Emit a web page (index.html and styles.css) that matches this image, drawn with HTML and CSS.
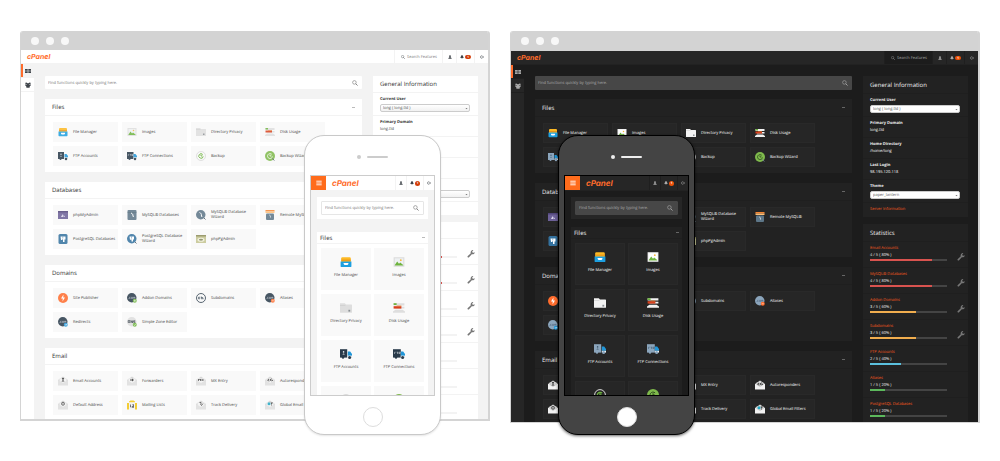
FILE: index.html
```html
<!DOCTYPE html>
<html lang="en">
<head>
<meta charset="utf-8">
<title>cPanel themes</title>
<link rel="stylesheet" href="styles.css">
</head>
<body>
<svg class="sprite" aria-hidden="true">
  <symbol id="files" viewBox="0 0 20 20"><path fill="#fdb924" d="M4 2h12a2 2 0 0 1 2 2v6H2V4a2 2 0 0 1 2-2z"/><path fill="#e8961c" d="M2 6h16v2H2z"/><path fill="#1d9fe0" d="M1 9h18v8a1.500 1.500 0 0 1-1.500 1.500h-15A1.500 1.500 0 0 1 1 17z"/><path fill="#fff" d="M6 11.500h8v2l-1.500 1.500h-5L6 13.500z"/></symbol>
  <symbol id="images" viewBox="0 0 20 20"><path fill="var(--paper)" d="M1 2h18v16H1z"/><path fill="var(--photo)" d="M3 4h14v12H3z"/><path fill="#6eb43f" d="M3 15l4-6 3 4 2-2 5 4v1H3z"/><circle cx="13" cy="7" r="1.500" fill="#f6b73c"/></symbol>
  <symbol id="folder" viewBox="0 0 20 20"><path fill="var(--paper)" d="M0 2h8l2 2h9a1 1 0 0 1 1 1v12a1 1 0 0 1-1 1H1a1 1 0 0 1-1-1z"/><path fill="var(--fold)" d="M0 5h9v1H0z"/><path fill="#8a8f94" d="M14 13h3v3h-3z"/></symbol>
  <symbol id="disk" viewBox="0 0 20 20"><path fill="var(--paper)" d="M1 2h18v4H1zM4 8h15v3H4zM4 13h12l4 3v2H0v-2z"/><path fill="#6eb43f" d="M1 2h5v3H1z"/><path fill="#d9411e" d="M1 7h13v4H1z"/><path fill="#e5812c" d="M6 6h8v1H6z"/></symbol>
  <symbol id="ftp" viewBox="0 0 20 20"><path fill="var(--ink)" d="M0 2h12v14H0z"/><path fill="#2196d8" d="M13 6h4l3 4v3h-7z"/><path fill="var(--cab)" d="M13 13h7v3h-7z"/><circle cx="5" cy="16" r="2" fill="var(--ink)"/><circle cx="16" cy="16" r="2.500" fill="var(--ink)"/><circle cx="6" cy="6.500" r="1.300" fill="var(--mark)"/><path fill="var(--mark)" d="M4 11q2-3.500 4 0z"/></symbol>
  <symbol id="ftpc" viewBox="0 0 20 20"><path fill="var(--ink)" d="M0 2h13v14H0z"/><path fill="#2196d8" d="M13 6h4l3 4v3h-7z"/><path fill="var(--cab)" d="M13 13h7v3h-7z"/><circle cx="5" cy="16" r="2" fill="var(--ink)"/><circle cx="16" cy="16" r="2.500" fill="var(--ink)"/><path stroke="var(--mark)" stroke-width=".8" fill="none" d="M2.500 10V7h2M6 7h3M7.500 7v3M10 10V7h2v2h-2"/></symbol>
  <symbol id="backup" viewBox="0 0 20 20"><circle cx="10" cy="10" r="9" fill="none" stroke="var(--ring)" stroke-width="1.500"/><path fill="none" stroke="#6eb43f" stroke-width="2" d="M13.500 7A4.500 4.500 0 1 0 14.500 11M10 7v3h3"/></symbol>
  <symbol id="bwiz" viewBox="0 0 20 20"><circle cx="10" cy="10" r="10" fill="#7fba4c"/><path fill="none" stroke="var(--wiz)" stroke-width="1.500" d="M13.500 6.500a5 5 0 1 0 1.500 4.500M10 7v3h3"/><path stroke="var(--handle)" stroke-width="2" d="M15 15l3.500 4"/></symbol>
  <symbol id="pma" viewBox="0 0 20 20"><path fill="#6c6097" d="M0 2h20v16H0z"/><path fill="#50457a" d="M0 2h20v3H0z"/><path fill="#d9d4ea" d="M6 14c1-3 3-5 4-6v6zM11 14V9l3 5z"/></symbol>
  <symbol id="mysql" viewBox="0 0 20 20"><rect x="1" y="0" width="18" height="20" rx="2" fill="#5d7688"/><path fill="#48606f" d="M1 5h18v1H1z"/><path fill="none" stroke="#fff" stroke-width="2" d="M8 6c3 1 4 3 4 6l1 2"/></symbol>
  <symbol id="mysqlw" viewBox="0 0 20 20"><circle cx="9.500" cy="9.500" r="9.500" fill="#5d7688"/><path fill="none" stroke="#fff" stroke-width="2" d="M7 5c3 1 4 3 4 7l1 2"/><path stroke="var(--handle)" stroke-width="2" d="M16 16l3 3"/></symbol>
  <symbol id="remote" viewBox="0 0 20 20"><path fill="#f58634" d="M1 0h18v3H1z"/><path fill="#fdc078" d="M1 3h18v3H1z"/><rect x="2" y="7" width="16" height="13" rx="2" fill="#5d7688"/><path fill="none" stroke="#fff" stroke-width="1.500" d="M9 10c2 1 2 3 2 5"/></symbol>
  <symbol id="pg" viewBox="0 0 20 20"><rect x="1" y="0" width="18" height="20" rx="3" fill="#34729f"/><path fill="#fff" d="M5 5h10v6h-2v5h-3v-5H8v1H6z"/><path stroke="#34729f" d="M9.500 5v4"/></symbol>
  <symbol id="pgw" viewBox="0 0 20 20"><circle cx="9.500" cy="9.500" r="9.500" fill="#34729f"/><path fill="#fff" d="M5 5h9v6h-2v4H9v-4H7v1H6z"/><path stroke="#34729f" d="M9 5v4"/><path stroke="var(--handle)" stroke-width="2" d="M16 16l3 3"/></symbol>
  <symbol id="ppg" viewBox="0 0 20 20"><path fill="#c5c591" d="M0 2h20v16H0z"/><path fill="#8c8c58" d="M0 2h20v3H0z"/><ellipse cx="10" cy="11.500" rx="7" ry="4" fill="#f0f0d8"/><path stroke="#777a50" stroke-width="2" d="M6 11.500h8M10 9.500v4"/></symbol>
  <symbol id="pub" viewBox="0 0 20 20"><circle cx="10" cy="10" r="10" fill="#ff6c2c"/><path fill="#fff" d="M11 3l-5 8h3.500L9 17l5-8h-3.500z"/></symbol>
  <symbol id="dot" viewBox="0 0 20 20"><circle cx="9.500" cy="9.500" r="9.500" fill="var(--ink)"/><path stroke="var(--mark)" stroke-width=".8" d="M3 11h1M7 8.500H5v2.500h2M9 8.500h2V11H9zM13 11V8.500h3V11M14.500 8.500V11" fill="none"/></symbol>
  <symbol id="addon" viewBox="0 0 20 20"><use href="#dot"/><circle cx="15.500" cy="15.500" r="4" fill="#6eb43f"/><path stroke="#fff" d="M13.500 15.500h4M15.500 13.500v4"/></symbol>
  <symbol id="alias" viewBox="0 0 20 20"><use href="#dot"/><circle cx="15.500" cy="15.500" r="4" fill="#ff6c2c"/><path stroke="#fff" d="M13.500 15.500h4"/></symbol>
  <symbol id="redir" viewBox="0 0 20 20"><use href="#dot"/><circle cx="15.500" cy="15.500" r="4" fill="#2196d8"/><path stroke="#fff" d="M13.500 15.500h4M16 14l1.500 1.500L16 17" fill="none"/></symbol>
  <symbol id="sub" viewBox="0 0 20 20"><circle cx="10" cy="10" r="9" fill="none" stroke="var(--ink)" stroke-width="1.800"/><path fill="none" stroke="var(--ink)" stroke-width="1.500" d="M8 8.500H5v3h3M10.500 7v4.500h3V9h-3M15 11.500h1"/></symbol>
  <symbol id="zone" viewBox="0 0 20 20"><circle cx="9.500" cy="9.500" r="9.500" fill="var(--paper)"/><path fill="none" stroke="#39424b" stroke-width="1.600" d="M2.500 7v4h3V7zM8 12V7l3 5V7M16.500 7.500H13v2h3v2h-3"/><circle cx="15.500" cy="15.500" r="4" fill="#6eb43f"/><path stroke="#fff" d="M13.500 15.500l1.500 1.500 2.500-3" fill="none"/></symbol>
  <symbol id="env" viewBox="0 0 20 20"><path fill="var(--flap)" d="M0 8l10-7 10 7v3H0z"/><path fill="var(--sheet)" d="M3 5h14v9H3z"/><path fill="var(--paper)" d="M0 8l10 6 10-6v11H0z"/></symbol>
  <symbol id="e-user" viewBox="0 0 20 20"><use href="#env"/><circle cx="10" cy="5.500" r="2" fill="#333"/><path fill="#333" d="M7 11q3-5 6 0z"/></symbol>
  <symbol id="e-fwd" viewBox="0 0 20 20"><use href="#env"/><path fill="#333" d="M6 7h4V5l4 3-4 3V9H6z"/></symbol>
  <symbol id="e-mx" viewBox="0 0 20 20"><use href="#env"/><path fill="none" stroke="#333" stroke-width="1.500" d="M5 10V6l2 2 2-2v4M11 6l4 4M15 6l-4 4"/></symbol>
  <symbol id="e-auto" viewBox="0 0 20 20"><use href="#env"/><path fill="none" stroke="#333" stroke-width="1.500" d="M8 6L5 8l3 3M6 8h3M13 5l-3 3 3 2M11 8h4v2"/></symbol>
  <symbol id="e-at" viewBox="0 0 20 20"><use href="#env"/><circle cx="10" cy="7.500" r="3" fill="none" stroke="#333" stroke-width="1.500"/><circle cx="10" cy="7.500" r="1" fill="#333"/></symbol>
  <symbol id="e-list" viewBox="0 0 20 20"><path fill="#f3c614" d="M0 6h4v13H0zM16 6h4v13h-4zM4 3l3-2h6l3 2v2H4z"/><path fill="var(--sheet)" d="M4 5h12v14H4z"/><path fill="none" stroke="#333" stroke-width="1.500" d="M7 9v5h2M11 9h2v6h-2v-3h2"/></symbol>
  <symbol id="e-track" viewBox="0 0 20 20"><use href="#env"/><path fill="none" stroke="#333" stroke-width="1.500" d="M7 5h3v3M9 8l2 3 3-4"/></symbol>
  <symbol id="e-filt" viewBox="0 0 20 20"><use href="#env"/><circle cx="8" cy="7.500" r="3" fill="#22a7c4"/><path fill="#333" d="M11 5h5l-2 3v4l-1-1V8z"/></symbol>
  <symbol id="search" viewBox="0 0 20 20"><circle cx="8" cy="8" r="6" fill="none" stroke="currentColor" stroke-width="2"/><path stroke="currentColor" stroke-width="3" d="M12.500 12.500l6 6"/></symbol>
  <symbol id="user" viewBox="0 0 20 20"><path fill="currentColor" d="M10 1a4.500 4.500 0 0 1 3 8v3l5 3v4H2v-4l5-3V9a4.500 4.500 0 0 1 3-8z"/></symbol>
  <symbol id="bell" viewBox="0 0 20 20"><path fill="currentColor" d="M10 1c4 0 5.500 3 5.500 7l3 7h-17l3-7C4.500 4 6 1 10 1zM7 16h6q-3 5-6 0z"/></symbol>
  <symbol id="out" viewBox="0 0 20 20"><path fill="none" stroke="currentColor" stroke-width="2.500" d="M12 4.500A6.500 6.500 0 1 0 12 15.500M8 10h10M15 6.500l3.500 3.500-3.500 3.500"/></symbol>
  <symbol id="grid" viewBox="0 0 20 20"><path fill="currentColor" d="M0 3h9v6H0zM11 3h9v6h-9zM0 11h9v6H0zM11 11h9v6h-9z"/></symbol>
  <symbol id="users" viewBox="0 0 20 20"><circle cx="4" cy="4.500" r="3" fill="currentColor"/><circle cx="16" cy="4.500" r="3" fill="currentColor"/><circle cx="10" cy="7" r="4" fill="currentColor"/><path fill="currentColor" d="M0 8h20l-2 5H2zM4 12h12v6q-6 2-12 0z"/></symbol>
  <symbol id="wrench" viewBox="0 0 20 20"><path fill="currentColor" d="M19.500 5.500a5.500 5.500 0 0 1-7.500 5L4.500 18.500a2.200 2.200 0 0 1-3-3L9.500 8A5.500 5.500 0 0 1 16 .500L13 3.500l.500 3 3 .500z"/></symbol>
  <symbol id="menu" viewBox="0 0 20 20"><path stroke="currentColor" stroke-width="3" d="M1 4h18M1 10h18M1 16h18"/></symbol>
  <symbol id="caret" viewBox="0 0 20 20"><path fill="currentColor" d="M3 6h14l-7 9z"/></symbol>
</svg>

<main class="stage">

<section class="mock light" aria-label="Light theme">
  <div class="window">
    <div class="chrome"><i></i><i></i><i></i></div>
    <div class="screen">
      <header class="topbar">
        <a class="logo" href="#">cPanel</a>
        <label class="feature"><svg><use href="#search"/></svg><input type="text" placeholder="Search Features" aria-label="Search Features"></label>
        <button class="tool" aria-label="Account"><svg><use href="#user"/></svg></button>
        <button class="tool bell" aria-label="Notifications"><svg><use href="#bell"/></svg><b>1</b></button>
        <button class="tool" aria-label="Log out"><svg><use href="#out"/></svg></button>
      </header>
      <div class="body">
        <nav class="side"><a class="on" href="#" aria-label="Home"><svg><use href="#grid"/></svg></a><a href="#" aria-label="User Manager"><svg><use href="#users"/></svg></a></nav>
        <div class="content">
          <div class="groups">
            <label class="find"><input type="text" placeholder="Find functions quickly by typing here." aria-label="Find functions"><svg><use href="#search"/></svg></label>
            <section class="panel">
              <h2>Files<button class="fold" aria-label="Collapse Files"></button></h2>
              <div class="tiles">
                <a href="#"><svg><use href="#files"/></svg><span>File Manager</span></a>
                <a href="#"><svg><use href="#images"/></svg><span>Images</span></a>
                <a href="#"><svg><use href="#folder"/></svg><span>Directory Privacy</span></a>
                <a href="#"><svg><use href="#disk"/></svg><span>Disk Usage</span></a>
                <a href="#"><svg><use href="#ftp"/></svg><span>FTP Accounts</span></a>
                <a href="#"><svg><use href="#ftpc"/></svg><span>FTP Connections</span></a>
                <a href="#"><svg><use href="#backup"/></svg><span>Backup</span></a>
                <a href="#"><svg><use href="#bwiz"/></svg><span>Backup Wizard</span></a>
              </div>
            </section>
            <section class="panel">
              <h2>Databases<button class="fold" aria-label="Collapse Databases"></button></h2>
              <div class="tiles">
                <a href="#"><svg><use href="#pma"/></svg><span>phpMyAdmin</span></a>
                <a href="#"><svg><use href="#mysql"/></svg><span>MySQL® Databases</span></a>
                <a href="#"><svg><use href="#mysqlw"/></svg><span>MySQL® Database Wizard</span></a>
                <a href="#"><svg><use href="#remote"/></svg><span>Remote MySQL®</span></a>
                <a href="#"><svg><use href="#pg"/></svg><span>PostgreSQL Databases</span></a>
                <a href="#"><svg><use href="#pgw"/></svg><span>PostgreSQL Database Wizard</span></a>
                <a href="#"><svg><use href="#ppg"/></svg><span>phpPgAdmin</span></a>
              </div>
            </section>
            <section class="panel">
              <h2>Domains<button class="fold" aria-label="Collapse Domains"></button></h2>
              <div class="tiles">
                <a href="#"><svg><use href="#pub"/></svg><span>Site Publisher</span></a>
                <a href="#"><svg><use href="#addon"/></svg><span>Addon Domains</span></a>
                <a href="#"><svg><use href="#sub"/></svg><span>Subdomains</span></a>
                <a href="#"><svg><use href="#alias"/></svg><span>Aliases</span></a>
                <a href="#"><svg><use href="#redir"/></svg><span>Redirects</span></a>
                <a href="#"><svg><use href="#zone"/></svg><span>Simple Zone Editor</span></a>
              </div>
            </section>
            <section class="panel">
              <h2>Email<button class="fold" aria-label="Collapse Email"></button></h2>
              <div class="tiles">
                <a href="#"><svg><use href="#e-user"/></svg><span>Email Accounts</span></a>
                <a href="#"><svg><use href="#e-fwd"/></svg><span>Forwarders</span></a>
                <a href="#"><svg><use href="#e-mx"/></svg><span>MX Entry</span></a>
                <a href="#"><svg><use href="#e-auto"/></svg><span>Autoresponders</span></a>
                <a href="#"><svg><use href="#e-at"/></svg><span>Default Address</span></a>
                <a href="#"><svg><use href="#e-list"/></svg><span>Mailing Lists</span></a>
                <a href="#"><svg><use href="#e-track"/></svg><span>Track Delivery</span></a>
                <a href="#"><svg><use href="#e-filt"/></svg><span>Global Email Filters</span></a>
              </div>
            </section>
          </div>
          <aside class="rail">
            <section class="panel info">
              <h2>General Information</h2>
              <div class="row"><label for="l-user">Current User</label><span class="pick"><select id="l-user"><option>long ( long.tld )</option></select><svg><use href="#caret"/></svg></span></div>
              <div class="row"><b>Primary Domain</b><span>long.tld</span></div>
              <div class="row"><b>Home Directory</b><span>/home/long</span></div>
              <div class="row"><b>Last Login</b><span>98.195.120.118</span></div>
              <div class="row"><label for="l-theme">Theme</label><span class="pick"><select id="l-theme"><option>paper_lantern</option></select><svg><use href="#caret"/></svg></span></div>
              <a class="more" href="#">Server Information</a>
            </section>
            <section class="panel stats">
              <h2>Statistics</h2>
              <div class="stat red"><a href="#">Email Accounts</a><span>4 / 5 ( 80% )</span><div class="bar"><i style="width:80%"></i></div><svg><use href="#wrench"/></svg></div>
              <div class="stat red"><a href="#">MySQL® Databases</a><span>4 / 5 ( 80% )</span><div class="bar"><i style="width:80%"></i></div><svg><use href="#wrench"/></svg></div>
              <div class="stat amber"><a href="#">Addon Domains</a><span>3 / 5 ( 60% )</span><div class="bar"><i style="width:60%"></i></div><svg><use href="#wrench"/></svg></div>
              <div class="stat amber"><a href="#">Subdomains</a><span>3 / 5 ( 60% )</span><div class="bar"><i style="width:60%"></i></div><svg><use href="#wrench"/></svg></div>
              <div class="stat blue"><a href="#">FTP Accounts</a><span>2 / 5 ( 40% )</span><div class="bar"><i style="width:40%"></i></div></div>
              <div class="stat green"><a href="#">Aliases</a><span>1 / 5 ( 20% )</span><div class="bar"><i style="width:20%"></i></div></div>
              <div class="stat green"><a href="#">PostgreSQL Databases</a><span>1 / 5 ( 20% )</span><div class="bar"><i style="width:20%"></i></div></div>
            </section>
          </aside>
        </div>
      </div>
    </div>
  </div>
  <div class="phone">
    <div class="speaker"><i></i><b></b></div>
    <div class="handset">
      <header class="topbar">
        <button class="menu" aria-label="Menu"><svg><use href="#menu"/></svg></button>
        <a class="logo" href="#">cPanel</a>
        <button class="tool" aria-label="Account"><svg><use href="#user"/></svg></button>
        <button class="tool bell" aria-label="Notifications"><svg><use href="#bell"/></svg><b>1</b></button>
        <button class="tool" aria-label="Log out"><svg><use href="#out"/></svg></button>
      </header>
      <div class="feed">
        <div class="findbox"><label class="find"><input type="text" placeholder="Find functions quickly by typing here." aria-label="Find functions"><svg><use href="#search"/></svg></label></div>
        <section class="panel">
          <h2>Files<button class="fold" aria-label="Collapse Files"></button></h2>
          <div class="tiles">
            <a href="#"><svg><use href="#files"/></svg><span>File Manager</span></a>
            <a href="#"><svg><use href="#images"/></svg><span>Images</span></a>
            <a href="#"><svg><use href="#folder"/></svg><span>Directory Privacy</span></a>
            <a href="#"><svg><use href="#disk"/></svg><span>Disk Usage</span></a>
            <a href="#"><svg><use href="#ftp"/></svg><span>FTP Accounts</span></a>
            <a href="#"><svg><use href="#ftpc"/></svg><span>FTP Connections</span></a>
            <a href="#" aria-label="Backup"><svg><use href="#backup"/></svg></a>
            <a href="#" aria-label="Backup Wizard"><svg><use href="#bwiz"/></svg></a>
          </div>
        </section>
      </div>
    </div>
    <button class="home" aria-label="Home"></button>
  </div>
</section>

<section class="mock dark" aria-label="Dark theme">
  <div class="window">
    <div class="chrome"><i></i><i></i><i></i></div>
    <div class="screen">
      <header class="topbar">
        <a class="logo" href="#">cPanel</a>
        <label class="feature"><svg><use href="#search"/></svg><input type="text" placeholder="Search Features" aria-label="Search Features"></label>
        <button class="tool" aria-label="Account"><svg><use href="#user"/></svg></button>
        <button class="tool bell" aria-label="Notifications"><svg><use href="#bell"/></svg><b>1</b></button>
        <button class="tool" aria-label="Log out"><svg><use href="#out"/></svg></button>
      </header>
      <div class="body">
        <nav class="side"><a class="on" href="#" aria-label="Home"><svg><use href="#grid"/></svg></a><a href="#" aria-label="User Manager"><svg><use href="#users"/></svg></a></nav>
        <div class="content">
          <div class="groups">
            <label class="find"><input type="text" placeholder="Find functions quickly by typing here." aria-label="Find functions"><svg><use href="#search"/></svg></label>
            <section class="panel">
              <h2>Files<button class="fold" aria-label="Collapse Files"></button></h2>
              <div class="tiles">
                <a href="#"><svg><use href="#files"/></svg><span>File Manager</span></a>
                <a href="#"><svg><use href="#images"/></svg><span>Images</span></a>
                <a href="#"><svg><use href="#folder"/></svg><span>Directory Privacy</span></a>
                <a href="#"><svg><use href="#disk"/></svg><span>Disk Usage</span></a>
                <a href="#"><svg><use href="#ftp"/></svg><span>FTP Accounts</span></a>
                <a href="#"><svg><use href="#ftpc"/></svg><span>FTP Connections</span></a>
                <a href="#"><svg><use href="#backup"/></svg><span>Backup</span></a>
                <a href="#"><svg><use href="#bwiz"/></svg><span>Backup Wizard</span></a>
              </div>
            </section>
            <section class="panel">
              <h2>Databases<button class="fold" aria-label="Collapse Databases"></button></h2>
              <div class="tiles">
                <a href="#"><svg><use href="#pma"/></svg><span>phpMyAdmin</span></a>
                <a href="#"><svg><use href="#mysql"/></svg><span>MySQL® Databases</span></a>
                <a href="#"><svg><use href="#mysqlw"/></svg><span>MySQL® Database Wizard</span></a>
                <a href="#"><svg><use href="#remote"/></svg><span>Remote MySQL®</span></a>
                <a href="#"><svg><use href="#pg"/></svg><span>PostgreSQL Databases</span></a>
                <a href="#"><svg><use href="#pgw"/></svg><span>PostgreSQL Database Wizard</span></a>
                <a href="#"><svg><use href="#ppg"/></svg><span>phpPgAdmin</span></a>
              </div>
            </section>
            <section class="panel">
              <h2>Domains<button class="fold" aria-label="Collapse Domains"></button></h2>
              <div class="tiles">
                <a href="#"><svg><use href="#pub"/></svg><span>Site Publisher</span></a>
                <a href="#"><svg><use href="#addon"/></svg><span>Addon Domains</span></a>
                <a href="#"><svg><use href="#sub"/></svg><span>Subdomains</span></a>
                <a href="#"><svg><use href="#alias"/></svg><span>Aliases</span></a>
                <a href="#"><svg><use href="#redir"/></svg><span>Redirects</span></a>
                <a href="#"><svg><use href="#zone"/></svg><span>Simple Zone Editor</span></a>
              </div>
            </section>
            <section class="panel">
              <h2>Email<button class="fold" aria-label="Collapse Email"></button></h2>
              <div class="tiles">
                <a href="#"><svg><use href="#e-user"/></svg><span>Email Accounts</span></a>
                <a href="#"><svg><use href="#e-fwd"/></svg><span>Forwarders</span></a>
                <a href="#"><svg><use href="#e-mx"/></svg><span>MX Entry</span></a>
                <a href="#"><svg><use href="#e-auto"/></svg><span>Autoresponders</span></a>
                <a href="#"><svg><use href="#e-at"/></svg><span>Default Address</span></a>
                <a href="#"><svg><use href="#e-list"/></svg><span>Mailing Lists</span></a>
                <a href="#"><svg><use href="#e-track"/></svg><span>Track Delivery</span></a>
                <a href="#"><svg><use href="#e-filt"/></svg><span>Global Email Filters</span></a>
              </div>
            </section>
          </div>
          <aside class="rail">
            <section class="panel info">
              <h2>General Information</h2>
              <div class="row"><label for="d-user">Current User</label><span class="pick"><select id="d-user"><option>long ( long.tld )</option></select><svg><use href="#caret"/></svg></span></div>
              <div class="row"><b>Primary Domain</b><span>long.tld</span></div>
              <div class="row"><b>Home Directory</b><span>/home/long</span></div>
              <div class="row"><b>Last Login</b><span>98.195.120.118</span></div>
              <div class="row"><label for="d-theme">Theme</label><span class="pick"><select id="d-theme"><option>paper_lantern</option></select><svg><use href="#caret"/></svg></span></div>
              <a class="more" href="#">Server Information</a>
            </section>
            <section class="panel stats">
              <h2>Statistics</h2>
              <div class="stat red"><a href="#">Email Accounts</a><span>4 / 5 ( 80% )</span><div class="bar"><i style="width:80%"></i></div><svg><use href="#wrench"/></svg></div>
              <div class="stat red"><a href="#">MySQL® Databases</a><span>4 / 5 ( 80% )</span><div class="bar"><i style="width:80%"></i></div><svg><use href="#wrench"/></svg></div>
              <div class="stat amber"><a href="#">Addon Domains</a><span>3 / 5 ( 60% )</span><div class="bar"><i style="width:60%"></i></div><svg><use href="#wrench"/></svg></div>
              <div class="stat amber"><a href="#">Subdomains</a><span>3 / 5 ( 60% )</span><div class="bar"><i style="width:60%"></i></div><svg><use href="#wrench"/></svg></div>
              <div class="stat blue"><a href="#">FTP Accounts</a><span>2 / 5 ( 40% )</span><div class="bar"><i style="width:40%"></i></div></div>
              <div class="stat green"><a href="#">Aliases</a><span>1 / 5 ( 20% )</span><div class="bar"><i style="width:20%"></i></div></div>
              <div class="stat green"><a href="#">PostgreSQL Databases</a><span>1 / 5 ( 20% )</span><div class="bar"><i style="width:20%"></i></div></div>
            </section>
          </aside>
        </div>
      </div>
    </div>
  </div>
  <div class="phone">
    <div class="speaker"><i></i><b></b></div>
    <div class="handset">
      <header class="topbar">
        <button class="menu" aria-label="Menu"><svg><use href="#menu"/></svg></button>
        <a class="logo" href="#">cPanel</a>
        <button class="tool" aria-label="Account"><svg><use href="#user"/></svg></button>
        <button class="tool bell" aria-label="Notifications"><svg><use href="#bell"/></svg><b>1</b></button>
        <button class="tool" aria-label="Log out"><svg><use href="#out"/></svg></button>
      </header>
      <div class="feed">
        <div class="findbox"><label class="find"><input type="text" placeholder="Find functions quickly by typing here." aria-label="Find functions"><svg><use href="#search"/></svg></label></div>
        <section class="panel">
          <h2>Files<button class="fold" aria-label="Collapse Files"></button></h2>
          <div class="tiles">
            <a href="#"><svg><use href="#files"/></svg><span>File Manager</span></a>
            <a href="#"><svg><use href="#images"/></svg><span>Images</span></a>
            <a href="#"><svg><use href="#folder"/></svg><span>Directory Privacy</span></a>
            <a href="#"><svg><use href="#disk"/></svg><span>Disk Usage</span></a>
            <a href="#"><svg><use href="#ftp"/></svg><span>FTP Accounts</span></a>
            <a href="#"><svg><use href="#ftpc"/></svg><span>FTP Connections</span></a>
            <a href="#" aria-label="Backup"><svg><use href="#backup"/></svg></a>
            <a href="#" aria-label="Backup Wizard"><svg><use href="#bwiz"/></svg></a>
          </div>
        </section>
      </div>
    </div>
    <button class="home" aria-label="Home"></button>
  </div>
</section>

</main>
</body>
</html>
```
FILE: styles.css
```css
* { box-sizing: border-box; }

body {
  margin: 0;
  background: #fff;
  font: 4px/7px "Open Sans", sans-serif;
  text-rendering: geometricPrecision;
}

a { color: inherit; text-decoration: none; }
h2 { margin: 0; }
i { font-style: normal; }

button, input, select {
  margin: 0;
  padding: 0;
  border: 0;
  border-radius: 0;
  background: none;
  color: inherit;
  font: inherit;
  text-rendering: inherit;
  appearance: none;
}

svg { flex: none; display: block; }
.sprite { position: absolute; width: 0; height: 0; }

.stage {
  display: grid;
  grid-template-columns: 1fr 1fr;
  align-items: start;
  gap: 20px;
  padding: 31px 20px;
}

/* Themes */

.mock { position: relative; color: var(--text); }

.light {
  --bg: #f3f3f3;
  --surface: #fff;
  --line: #f3f3f3;
  --tile: #f9f9f9;
  --edge: #f9f9f9;
  --text: #333;
  --label: #444;
  --muted: #777;
  --icon: #3f444a;
  --field: #fff;
  --field-edge: #e6e6e6;
  --link: #ff6c2c;
  --track: #f3f3f3;
  --badge: #d33c07;
  --ink: #293a4a;
  --cab: #dfe3e6;
  --mark: #e8edf2;
  --paper: #dedede;
  --photo: #eef1f3;
  --fold: #c9c9c9;
  --flap: #d2d2d2;
  --sheet: #f3f3f3;
  --ring: #d2d2d2;
  --wiz: #fff;
  --handle: #52606b;
  --chrome: 19px;
  --screen: 369px;
  --head: 17px;
  --search: 13px;
}

.dark {
  --bg: #1c1c1c;
  --surface: #222;
  --line: #1f1f1f;
  --tile: #262626;
  --edge: #292929;
  --text: #eee;
  --label: #fff;
  --muted: #aaa;
  --icon: #aaa;
  --field: #474747;
  --field-edge: #474747;
  --link: #ff5c1f;
  --track: #444;
  --badge: #ee5208;
  --ink: #8ba5bc;
  --cab: #eef2f5;
  --mark: #3c5469;
  --paper: #f2f2f2;
  --photo: #fff;
  --fold: #ccc;
  --flap: #ddd;
  --sheet: #ccc;
  --ring: #eee;
  --wiz: #26401a;
  --handle: #6f8290;
  --chrome: 20px;
  --screen: 371px;
  --head: 18px;
  --search: 14px;
}

/* Browser window */

.window {
  overflow: hidden;
  border: solid #d4d4d4;
  border-width: 0 2px 1px 1px;
  border-radius: 3px 3px 0 0;
}

.light .window { border-bottom-width: 2px; }

.chrome {
  display: flex;
  align-items: center;
  gap: 7px;
  height: var(--chrome);
  padding-left: 10px;
  background: #d3d3d3;
}

.chrome i { width: 8px; height: 8px; border-radius: 50%; background: #f8f8f8; }

.screen { height: var(--screen); overflow: hidden; background: var(--bg); }

.topbar {
  display: flex;
  height: 14px;
  border-bottom: 1px solid var(--line);
  background: var(--surface);
}

.dark .topbar { background: #262626; border-color: #222; }

.logo {
  margin-right: auto;
  padding-left: 6px;
  color: #ff6c2c;
  font: italic 700 7px/14px Inter, sans-serif;
}

.feature {
  display: flex;
  align-items: center;
  gap: 2px;
  width: 48px;
  padding-left: 6px;
  border-left: 1px solid var(--line);
  color: var(--muted);
}

.dark .feature { background: #1c1c1c; }
.feature svg { width: 4px; height: 4px; color: var(--icon); }
.feature input { flex: 1; min-width: 0; padding-top: 1px; }
input::placeholder { color: inherit; opacity: 1; }

.tool {
  display: flex;
  align-items: center;
  justify-content: center;
  gap: 1px;
  width: 14px;
  border-left: 1px solid var(--line);
  color: var(--icon);
}

.tool svg { width: 4px; height: 4px; }
.bell { width: 18px; }
.bell b {
  width: 6px;
  border-radius: 2px;
  background: var(--badge);
  color: #fff;
  font-size: 3px;
  line-height: 4px;
}

.body { display: flex; }

.side {
  display: flex;
  flex-direction: column;
  flex: none;
  width: 13px;
  min-height: 360px;
  background: var(--surface);
}

.dark .side { background: #262626; }
.side a {
  display: grid;
  place-items: center;
  height: 14px;
  border-bottom: 1px solid var(--line);
  color: var(--icon);
}
.side .on { background: var(--bg); box-shadow: inset 2px 0 #ff6c2c; }
.side svg { width: 6px; height: 6px; }

.content {
  flex: 1;
  display: grid;
  grid-template-columns: 1fr 105px;
  align-items: start;
  gap: 11px;
  padding: 12px 10px 0 11px;
}

.dark .content { padding-top: 11px; }

.groups { display: grid; gap: 10px; }
.dark .groups .find { margin-bottom: -1px; }

.find {
  display: flex;
  align-items: center;
  height: var(--search);
  padding: 0 4px 0 3px;
  border-radius: 1px;
  background: var(--field);
  color: var(--muted);
}

.find input { flex: 1; min-width: 0; padding-top: 1px; }
.find svg { width: 6px; height: 6px; }

.panel { background: var(--surface); }

.panel h2 {
  display: flex;
  align-items: center;
  justify-content: space-between;
  height: var(--head);
  padding: 0 7px;
  border-bottom: 1px solid var(--line);
  font-size: 6px;
  font-weight: 400;
  line-height: 8px;
}

.fold { width: 3px; height: 1px; background: var(--muted); opacity: .5; }

.tiles {
  display: grid;
  grid-template-columns: repeat(auto-fill, 65px);
  grid-auto-rows: 20px;
  gap: 4px;
  padding: 6px 8px;
}

.tiles a {
  display: flex;
  align-items: center;
  gap: 5px;
  padding: 0 0 0 4px;
  border: 1px solid var(--edge);
  background: var(--tile);
  color: var(--label);
  line-height: 5px;
}

.tiles svg { width: 10px; height: 10px; }
.light .window .tiles svg { opacity: .85; }

/* Right rail */

.rail { display: grid; gap: 7px; }

.row {
  display: flex;
  flex-direction: column;
  padding: 3px 8px 3px 7px;
  border-bottom: 1px solid var(--line);
}

.row label, .row b { font-weight: 700; }
.row > span { color: var(--label); }

.pick { display: grid; align-items: center; margin-top: 1px; }
.pick select, .pick svg { grid-area: 1 / 1; }

.pick select {
  height: 8px;
  padding: 1px 2px 0;
  border: 1px solid #ccc;
  border-radius: 2px;
  background: linear-gradient(#fff, #f1f1f1);
  color: #555;
  line-height: 5px;
}

.dark .pick select { background: #fff; }
.pick svg { justify-self: end; width: 3px; height: 3px; margin-right: 2px; color: #777; pointer-events: none; }

.more { display: block; padding: 3px 7px; color: var(--link); }
.dark .more { padding-bottom: 4px; }

.stat {
  display: grid;
  grid-template-columns: 1fr 8px;
  grid-template-rows: 7px 7px 2px;
  column-gap: 10px;
  height: 26px;
  padding: 3px 3px 0 7px;
  border-bottom: 1px solid var(--line);
}

.stat > * { grid-column: 1; }
.stat a { color: var(--link); }
.stat svg { grid-column: 2; grid-row: 1 / 4; align-self: end; width: 8px; height: 8px; color: #777; }
.bar { height: 2px; background: var(--track); }
.bar i { display: block; height: 2px; background: var(--fill); }
.red { --fill: #d9534f; }
.amber { --fill: #f0ad4e; }
.blue { --fill: #5bc0de; }
.green { --fill: #5cb85c; }

/* Phone, laid over the window's lower half */

.phone {
  position: absolute;
  top: 104px;
  right: 49px;
  display: flex;
  flex-direction: column;
  align-items: center;
  width: 137px;
  height: 300px;
  border: 1px solid #c9c9c9;
  border-radius: 20px;
  background: #fff;
  box-shadow: 0 1px 2px rgb(0 0 0 / 10%);
}

.dark .phone {
  right: auto;
  left: 48px;
  border-color: #000;
  background: #444;
  box-shadow: 0 1px 3px rgb(0 0 0 / 60%);
}

.speaker {
  display: flex;
  align-items: center;
  gap: 6px;
  height: 23px;
  padding-top: 19px;
}

.speaker i { width: 4px; height: 4px; border-radius: 50%; background: #ccc; }
.speaker b { width: 21px; height: 2px; border-radius: 1px; background: #ccc; }
.dark .speaker i, .dark .speaker b { background: #eee; }

.handset {
  width: 125px;
  height: 221px;
  margin-top: 16px;
  overflow: hidden;
  border: 1px solid #ccc;
  background: var(--bg);
}

.dark .handset { border-color: #000; }

.handset .topbar { height: 15px; }
.handset .logo { font-size: 8px; line-height: 15px; }
.menu { display: grid; place-items: center; width: 15px; background: #ff6c1c; color: #fff; }
.menu svg { width: 6px; height: 6px; }
.handset .tool { width: 11px; }
.handset .bell { width: 17px; }
.handset .bell b { width: 5px; border-radius: 50%; line-height: 5px; }

.feed { display: grid; gap: 13px; padding: 6px 6px 0; }
.dark .feed { gap: 8px; }

.findbox { padding: 4px; background: var(--surface); }
.dark .findbox { background: #262626; }
.findbox .find { height: 14px; border: 1px solid var(--field-edge); }

.handset h2 { height: 12px; padding: 0 3px; }

.handset .tiles {
  grid-template-columns: 1fr 1fr;
  grid-auto-rows: 42px;
  gap: 4px 3px;
  padding: 4px;
}

.handset .tiles a { flex-direction: column; gap: 4px; padding: 7px 0 0; line-height: 8px; }
.handset .tiles svg { width: 12px; height: 12px; }

.home {
  width: 20px;
  height: 20px;
  margin-top: 11px;
  border: 1px solid #ddd;
  border-radius: 50%;
  background: #fff;
}
```
